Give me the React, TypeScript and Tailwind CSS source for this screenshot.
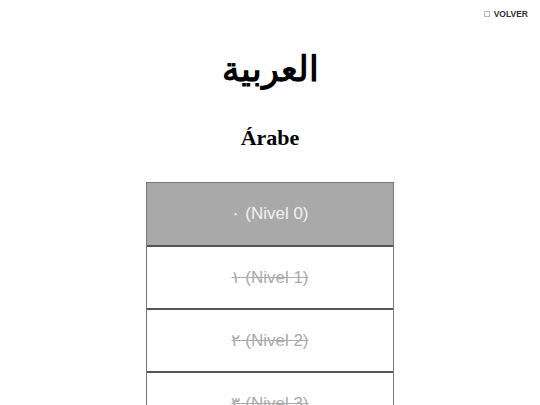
export default function App() {
  const levels = [
    { num: '٠', label: '(Nivel 0)', active: true },
    { num: '١', label: '(Nivel 1)', active: false },
    { num: '٢', label: '(Nivel 2)', active: false },
    { num: '٣', label: '(Nivel 3)', active: false },
  ];

  return (
    <div className="relative min-h-[405px] bg-white font-['Liberation_Sans',sans-serif]">
      {/* Back link */}
      <div className="absolute right-[12px] top-[8px] flex items-center gap-[4px] text-[8.5px] font-bold text-[#333]">
        <span className="inline-block h-[6px] w-[6px] border border-[#bbb]" />
        <span>VOLVER</span>
      </div>

      <div className="flex flex-col items-center pt-[38px]">
        <h1 className="font-['Liberation_Serif','DejaVu_Serif',serif] text-[35px] font-bold leading-[64px] text-black">
          العربية
        </h1>
        <h2 className="mt-[22px] font-['Liberation_Serif',serif] text-[22px] font-bold leading-[28px] text-black">
          Árabe
        </h2>

        <div className="mt-[30px] w-[248px] border-x border-[#777]">
          {levels.map((lvl) => (
            <div
              key={lvl.label}
              className={
                lvl.active
                  ? 'flex h-[63px] items-center justify-center border-t border-[#777] bg-[#a9a9a9] text-[17px] text-[#f2f2f2]'
                  : 'flex h-[63px] items-center justify-center border-t-2 border-[#555] bg-white text-[17px] text-[#aaa] line-through'
              }
            >
              {lvl.num} {lvl.label}
            </div>
          ))}
        </div>
      </div>
    </div>
  );
}
